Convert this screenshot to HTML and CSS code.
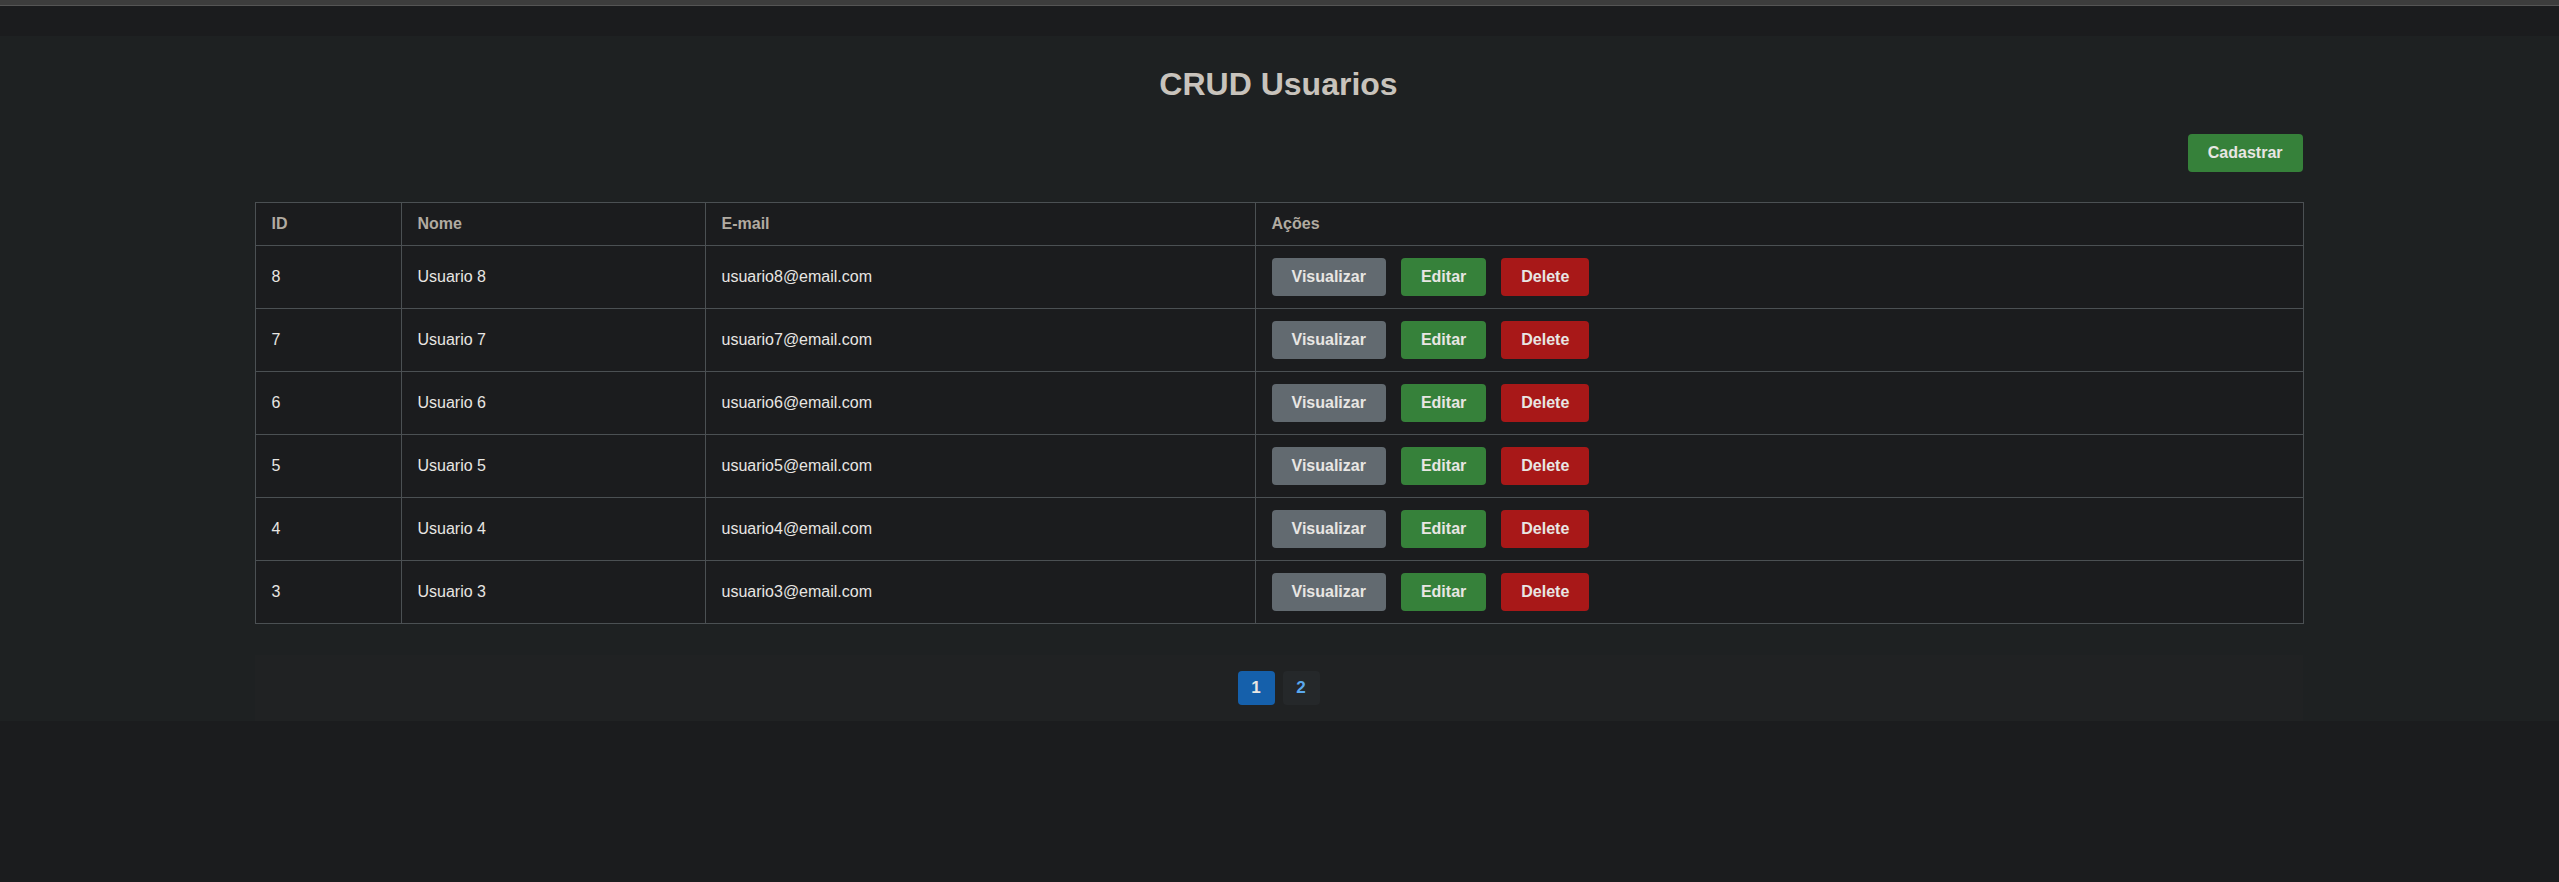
FILE: index.html
```html
<!DOCTYPE html>
<html lang="pt-BR">
<head>
<meta charset="utf-8">
<title>CRUD Usuarios</title>
<link rel="stylesheet" href="styles.css">
</head>
<body>
<div class="topbar"></div>
<div class="spacer"></div>
<main class="section">
  <div class="container">
    <h1 class="title">CRUD Usuarios</h1>
    <div class="toolbar">
      <button class="btn btn-green">Cadastrar</button>
    </div>
    <table class="users">
      <colgroup>
        <col class="c-id"><col class="c-nome"><col class="c-email"><col class="c-acoes">
      </colgroup>
      <thead>
        <tr><th>ID</th><th>Nome</th><th>E-mail</th><th>Ações</th></tr>
      </thead>
      <tbody>
        <tr><td>8</td><td>Usuario 8</td><td>usuario8@email.com</td><td><div class="actions"><button class="btn btn-gray">Visualizar</button><button class="btn btn-green">Editar</button><button class="btn btn-red">Delete</button></div></td></tr>
        <tr><td>7</td><td>Usuario 7</td><td>usuario7@email.com</td><td><div class="actions"><button class="btn btn-gray">Visualizar</button><button class="btn btn-green">Editar</button><button class="btn btn-red">Delete</button></div></td></tr>
        <tr><td>6</td><td>Usuario 6</td><td>usuario6@email.com</td><td><div class="actions"><button class="btn btn-gray">Visualizar</button><button class="btn btn-green">Editar</button><button class="btn btn-red">Delete</button></div></td></tr>
        <tr><td>5</td><td>Usuario 5</td><td>usuario5@email.com</td><td><div class="actions"><button class="btn btn-gray">Visualizar</button><button class="btn btn-green">Editar</button><button class="btn btn-red">Delete</button></div></td></tr>
        <tr><td>4</td><td>Usuario 4</td><td>usuario4@email.com</td><td><div class="actions"><button class="btn btn-gray">Visualizar</button><button class="btn btn-green">Editar</button><button class="btn btn-red">Delete</button></div></td></tr>
        <tr><td>3</td><td>Usuario 3</td><td>usuario3@email.com</td><td><div class="actions"><button class="btn btn-gray">Visualizar</button><button class="btn btn-green">Editar</button><button class="btn btn-red">Delete</button></div></td></tr>
      </tbody>
    </table>
    <nav class="pager">
      <a class="page active">1</a>
      <a class="page">2</a>
    </nav>
  </div>
</main>
</body>
</html>
```
FILE: styles.css
```css
* { box-sizing: border-box; }
html, body {
  margin: 0;
  padding: 0;
  background: #1b1c1e;
  font-family: "Liberation Sans", Arial, sans-serif;
  font-size: 16px;
  color: #e8e6e3;
}
.topbar {
  height: 6px;
  background: #3d3d3d;
  border-bottom: 1px solid #555555;
}
.spacer { height: 30px; }
.section {
  background: #1e2122;
  padding-top: 29px;
}
.container {
  width: 2048px;
  margin-left: calc(50% - 1025px);
}
.title {
  margin: 0;
  text-align: center;
  font-size: 32px;
  line-height: 38px;
  font-weight: bold;
  color: #c8c3bc;
}
.toolbar {
  display: flex;
  justify-content: flex-end;
  margin-top: 31px;
  margin-bottom: 30px;
}
.btn {
  font-family: "Liberation Sans", Arial, sans-serif;
  font-size: 16px;
  font-weight: bold;
  color: #e8e6e3;
  height: 38px;
  padding: 0 20px;
  border: none;
  border-radius: 4px;
  line-height: 38px;
}
.btn-green { background: #36813a; }
.btn-gray { background: #626a70; }
.btn-red { background: #a81818; }
.users {
  width: 2048px;
  table-layout: fixed;
  border-collapse: collapse;
  background: #1b1c1e;
}
.c-id { width: 146px; }
.c-nome { width: 304px; }
.c-email { width: 550px; }
.c-acoes { width: 1048px; }
.users th, .users td {
  border: 1px solid #4b5053;
  text-align: left;
  vertical-align: middle;
  padding: 0 16px;
}
.users th {
  height: 43px;
  font-weight: bold;
  color: #b1aba1;
}
.users td {
  height: 63px;
  color: #e8e6e3;
}
.actions {
  display: flex;
  gap: 15px;
}
.pager {
  margin-top: 31px;
  background: #202223;
  display: flex;
  justify-content: center;
  gap: 8px;
  padding: 16px 0;
}
.page {
  width: 37px;
  height: 34px;
  border-radius: 4px;
  background: #25282a;
  color: #5aa8ee;
  font-weight: bold;
  font-size: 17px;
  display: flex;
  align-items: center;
  justify-content: center;
}
.page.active {
  background: #1560ab;
  color: #e8e6e3;
}
```
